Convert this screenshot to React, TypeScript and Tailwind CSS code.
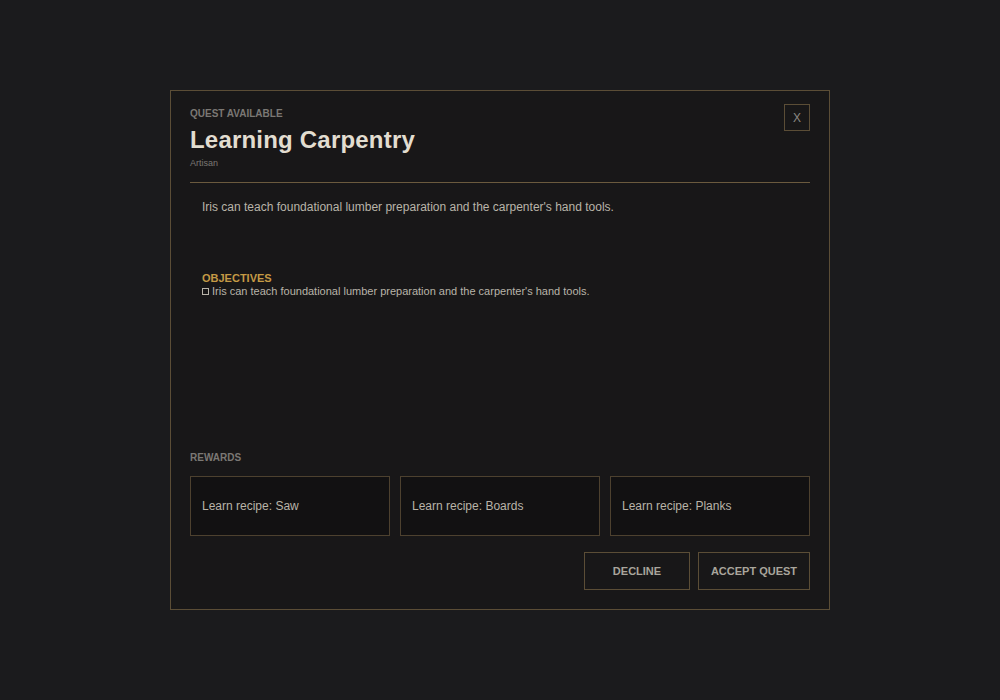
const rewards = ["Learn recipe: Saw", "Learn recipe: Boards", "Learn recipe: Planks"];

export default function App() {
  return (
    <div
      className="flex h-[700px] w-full items-center justify-center bg-[#1b1b1d]"
      style={{ fontFamily: '"Liberation Sans", Arial, sans-serif' }}
    >
      <div className="flex h-[520px] w-[660px] flex-col border border-[#5b4d36] bg-[#181718] px-[19px] pb-[19px] pt-[17px]">
        {/* Header */}
        <div className="flex items-start justify-between">
          <div className="flex flex-col">
            <span className="text-[10px] font-bold leading-[12px] text-[#7b7874]">
              QUEST AVAILABLE
            </span>
            <h1 className="mt-[5px] text-[24px] font-bold leading-[30px] tracking-[0.2px] text-[#e2ddd0]">
              Learning Carpentry
            </h1>
            <span className="mt-[2px] text-[9px] leading-[12px] text-[#7b7874]">Artisan</span>
          </div>
          <button className="mt-[-4px] flex h-[27px] w-[26px] items-center justify-center border border-[#5b4d36] text-[12px] text-[#8a8782]">
            X
          </button>
        </div>

        <div className="mt-[13px] h-px bg-[#6b5a3e]" />

        {/* Body */}
        <div className="px-3 pt-[16px]">
          <p className="text-[12px] leading-[16px] text-[#b9b4a9]">
            Iris can teach foundational lumber preparation and the carpenter's hand tools.
          </p>
          <div className="mt-[56px]">
            <div className="text-[11px] font-bold leading-[14px] text-[#c49a45]">OBJECTIVES</div>
            <div className="flex items-center gap-[3px] text-[11px] leading-[12px] text-[#b9b4a9]">
              <span className="inline-block h-[7px] w-[7px] border border-[#b9b4a9]" />
              <span>Iris can teach foundational lumber preparation and the carpenter's hand tools.</span>
            </div>
          </div>
        </div>

        <div className="flex-1" />

        {/* Rewards */}
        <div className="text-[10px] font-bold leading-[12px] text-[#7b7874]">REWARDS</div>
        <div className="mt-[12px] grid grid-cols-3 gap-[10px]">
          {rewards.map((r) => (
            <div
              key={r}
              className="flex h-[60px] items-center border border-[#4d412f] bg-[#121112] px-[11px] text-[12px] text-[#b9b4a9]"
            >
              {r}
            </div>
          ))}
        </div>

        {/* Actions */}
        <div className="mt-[16px] flex justify-end gap-[8px]">
          <button className="h-[38px] w-[106px] border border-[#5b4d36] text-[11px] font-bold text-[#a9a59c]">
            DECLINE
          </button>
          <button className="h-[38px] w-[112px] border border-[#5b4d36] text-[11px] font-bold text-[#a9a59c]">
            ACCEPT QUEST
          </button>
        </div>
      </div>
    </div>
  );
}
